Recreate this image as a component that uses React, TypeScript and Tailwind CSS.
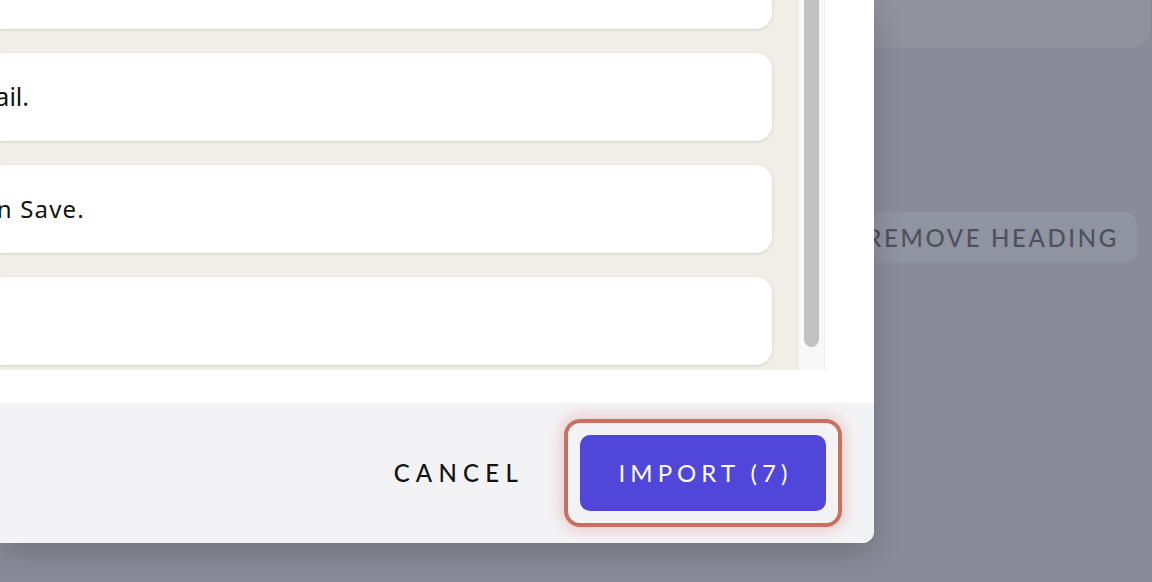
import React from "react";

const font = { fontFamily: "Lato, 'Noto Sans', 'Liberation Sans', sans-serif" };

export default function App() {
  return (
    <div
      className="relative w-[1152px] h-[582px] overflow-hidden bg-[#898c98]"
      style={font}
    >
      {/* background page (dimmed by overlay) */}
      <div className="flex flex-col">
        <div className="h-[48px] mr-[2px] rounded-br-2xl bg-[#90939e] border-b border-[#8d8f99]" />
        <div className="mt-[164px] flex justify-end pr-[15px]">
          <button className="h-[51px] w-[420px] rounded-xl bg-[#9093a0] pr-[18px] text-right text-[24px] font-medium tracking-[0.11em] text-[#4e515d]">
            REMOVE HEADING
          </button>
        </div>
      </div>

      {/* modal */}
      <div className="absolute left-0 top-0 flex h-[543px] w-[874px] flex-col overflow-hidden rounded-br-xl bg-white shadow-[0_10px_30px_rgba(0,0,0,0.18)]">
        <div className="flex-1 pr-[49px] pb-[33px]">
          <div className="flex h-[370px] overflow-hidden">
            <div className="flex-1 overflow-hidden bg-[#f1eee8]">
              <div className="-mt-[59px] flex flex-col gap-6 pr-[25px]">
                <div className="h-[88px] rounded-r-2xl bg-white shadow-[0_1px_3px_rgba(80,70,50,0.18)]" />
                <div className="flex h-[88px] items-center rounded-r-2xl bg-white shadow-[0_1px_3px_rgba(80,70,50,0.18)]">
                  <div
                    className="flex w-[29px] justify-end whitespace-nowrap text-[25px] text-[#111]"
                    style={{ fontFamily: "'Noto Sans', 'DejaVu Sans', sans-serif" }}
                  >
                    Please verify your email.
                  </div>
                </div>
                <div className="flex h-[88px] items-center rounded-r-2xl bg-white shadow-[0_1px_3px_rgba(80,70,50,0.18)]">
                  <div
                    className="flex w-[85px] justify-end whitespace-nowrap text-[24px] tracking-[0.05em] text-[#111]"
                    style={{ fontFamily: "'Noto Sans', Lato, sans-serif" }}
                  >
                    Then click on Save.
                  </div>
                </div>
                <div className="h-[88px] rounded-r-2xl bg-white shadow-[0_1px_3px_rgba(80,70,50,0.18)]" />
              </div>
            </div>
            <div className="flex w-[28px] justify-center border-l-2 border-r border-[#ececec] bg-[#f8f8f8] pl-[5px] pr-[5px]">
              <div className="h-[347px] w-[16px] rounded-b-full bg-[#c1c1c1]" />
            </div>
          </div>
        </div>
        <div className="flex h-[140px] items-center justify-end gap-[40px] bg-[#f3f3f5] pr-[32px]">
          <button className="text-[24px] font-medium tracking-[0.26em] text-[#111]">
            CANCEL
          </button>
          <div className="rounded-[16px] border-4 border-[#c87161] p-3 shadow-[0_0_14px_3px_rgba(210,110,95,0.3)]">
            <button className="flex h-[76px] w-[246px] items-center justify-center rounded-[10px] bg-[#5046d9] pl-[5px] text-[24px] font-normal tracking-[0.21em] text-white">
              IMPORT (7)
            </button>
          </div>
        </div>
      </div>
    </div>
  );
}
